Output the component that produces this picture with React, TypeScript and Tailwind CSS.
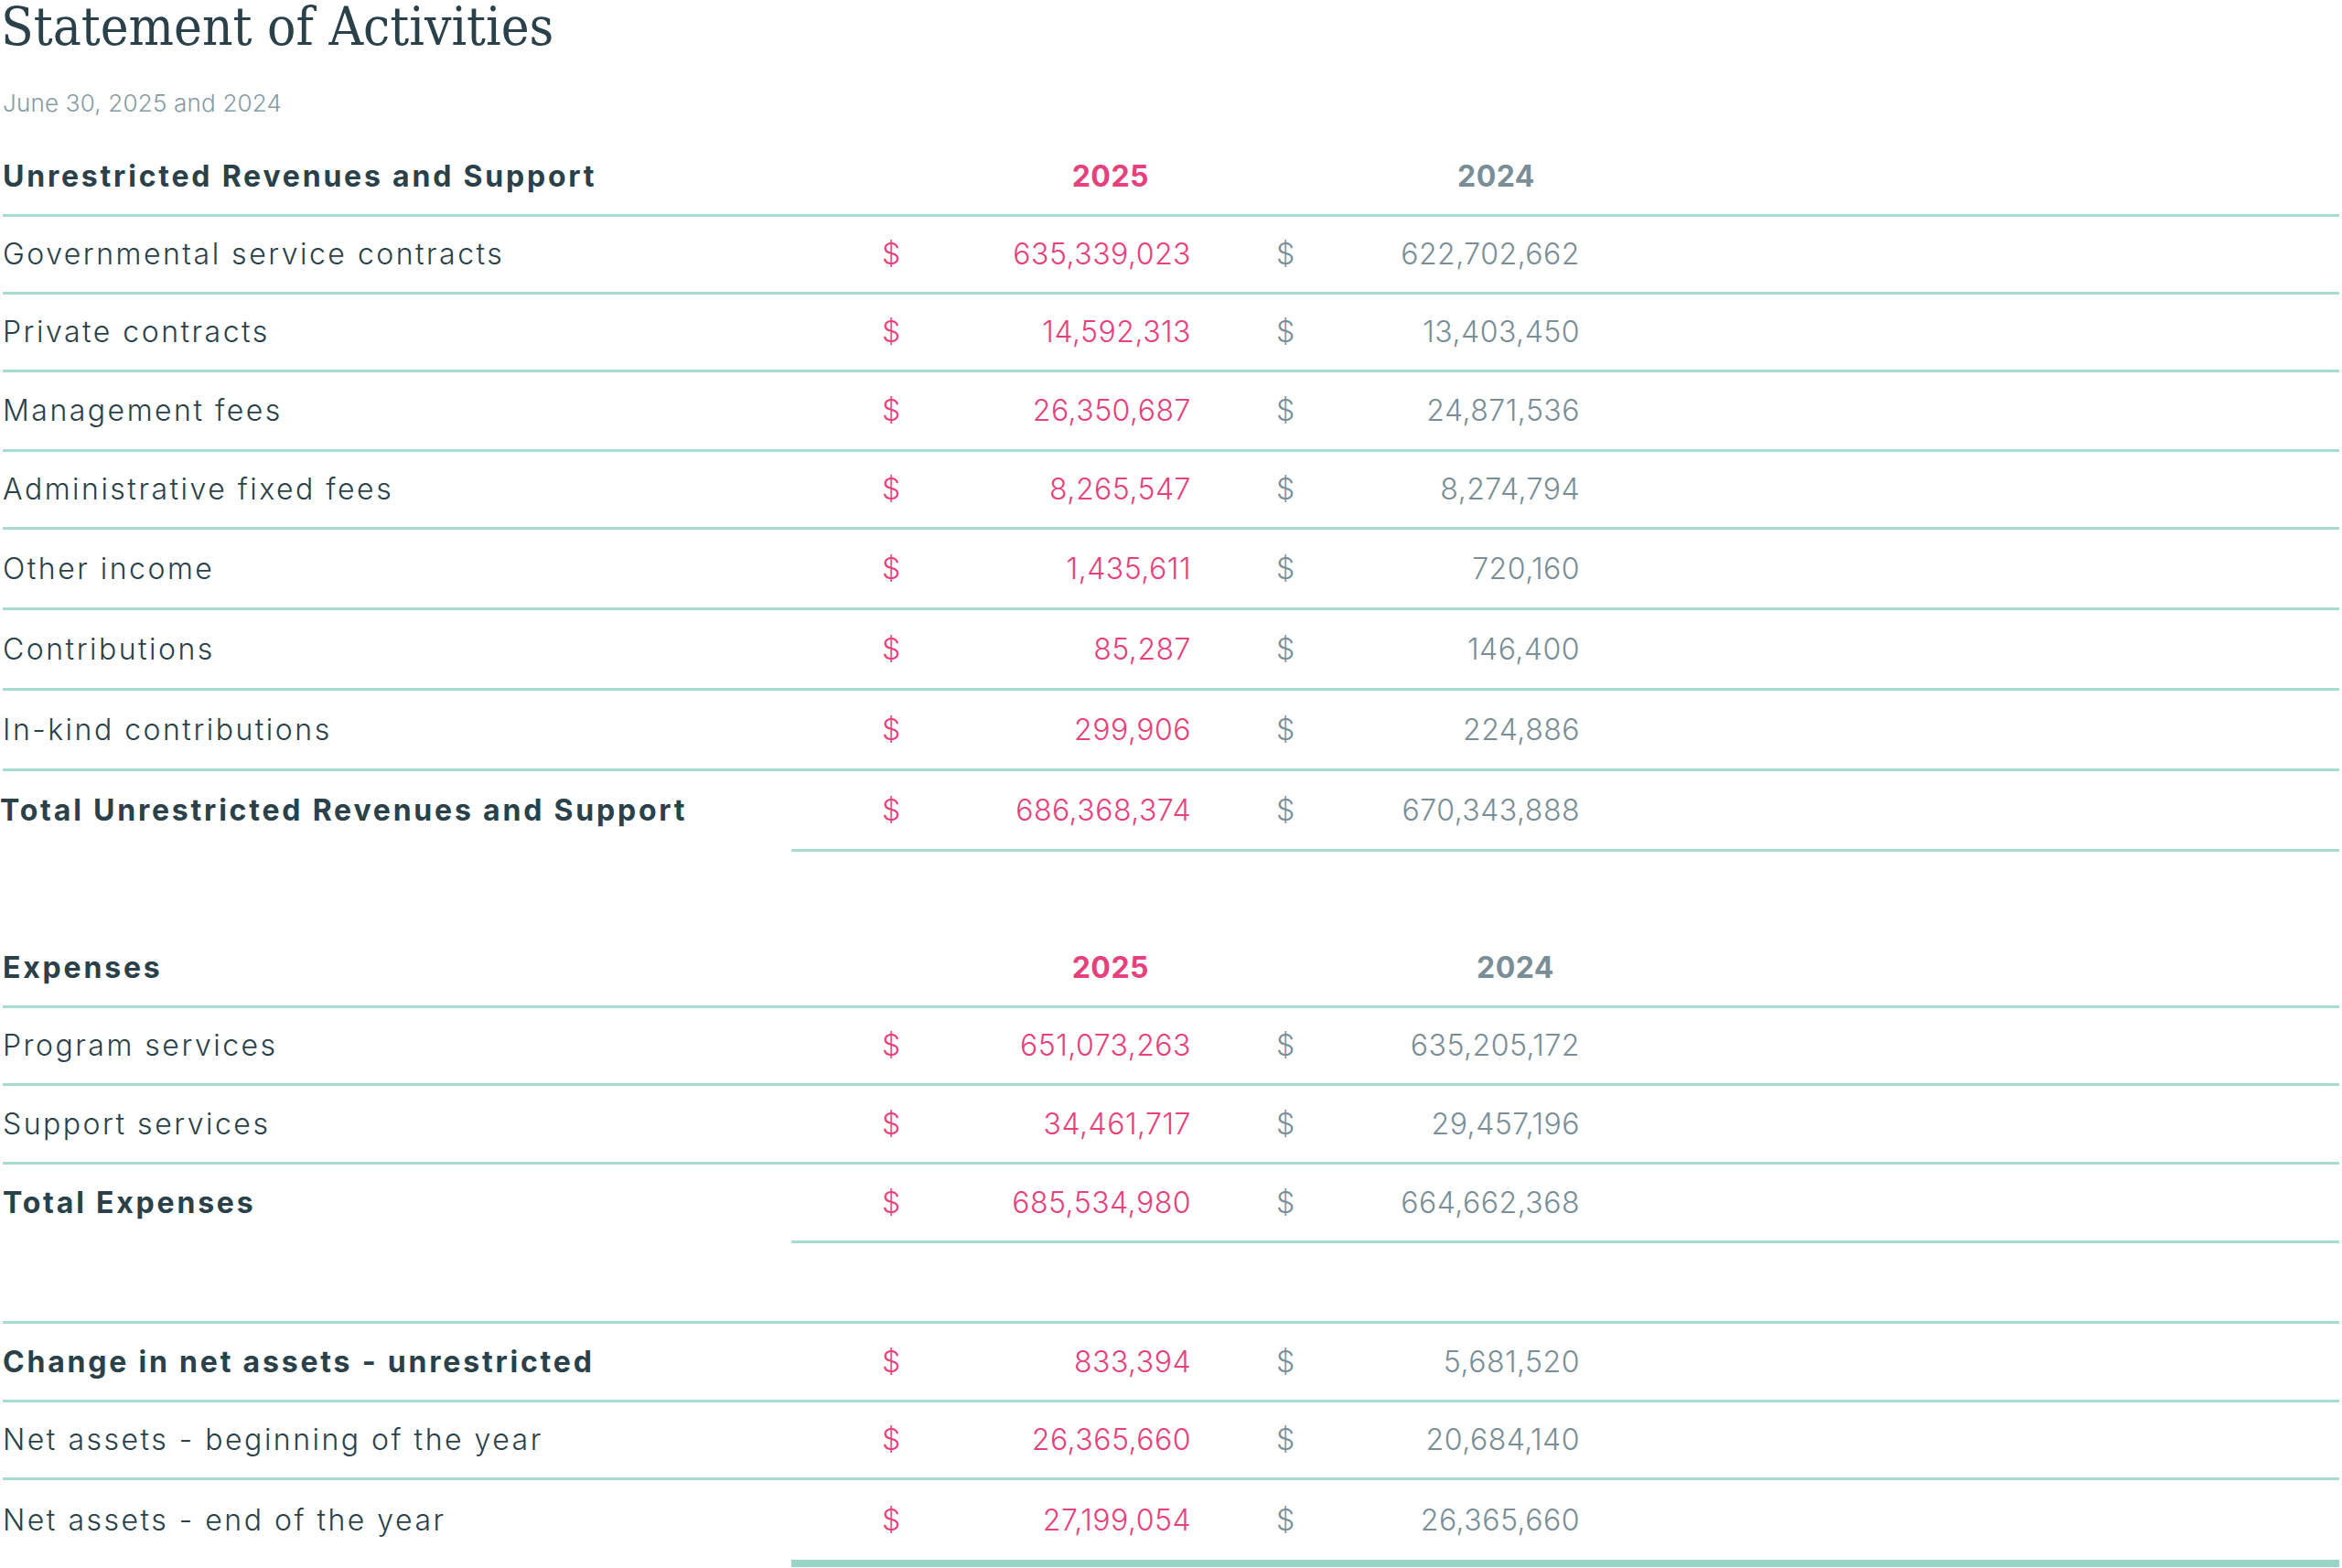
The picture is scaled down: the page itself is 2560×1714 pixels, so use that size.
import React from "react";

type Line = "full" | "total" | "thick" | "none";

type RowData = {
    label?: string;
    a?: string;
    b?: string;
    bold?: boolean;
    h: string;
    line: Line;
    shiftLabel?: boolean;
};

const cols = "grid grid-cols-[959px_40px_300px_93px_40px_292px_1fr] items-center";

const revenues: RowData[] = [
    { label: "Governmental service contracts", a: "635,339,023", b: "622,702,662", h: "h-[85px]", line: "full" },
    { label: "Private contracts", a: "14,592,313", b: "13,403,450", h: "h-[85px]", line: "full" },
    { label: "Management fees", a: "26,350,687", b: "24,871,536", h: "h-[87px]", line: "full" },
    { label: "Administrative fixed fees", a: "8,265,547", b: "8,274,794", h: "h-[85px]", line: "full" },
    { label: "Other income", a: "1,435,611", b: "720,160", h: "h-[88px]", line: "full" },
    { label: "Contributions", a: "85,287", b: "146,400", h: "h-[88px]", line: "full" },
    { label: "In-kind contributions", a: "299,906", b: "224,886", h: "h-[88px]", line: "full" },
    { label: "Total Unrestricted Revenues and Support", a: "686,368,374", b: "670,343,888", bold: true, h: "h-[88px]", line: "total", shiftLabel: true },
];

const expenses: RowData[] = [
    { label: "Program services", a: "651,073,263", b: "635,205,172", h: "h-[85px]", line: "full" },
    { label: "Support services", a: "34,461,717", b: "29,457,196", h: "h-[86px]", line: "full" },
    { label: "Total Expenses", a: "685,534,980", b: "664,662,368", bold: true, h: "h-[86px]", line: "total" },
    { h: "h-[88px]", line: "full" },
    { label: "Change in net assets - unrestricted", a: "833,394", b: "5,681,520", bold: true, h: "h-[86px]", line: "full" },
    { label: "Net assets - beginning of the year", a: "26,365,660", b: "20,684,140", h: "h-[85px]", line: "full" },
    { label: "Net assets - end of the year", a: "27,199,054", b: "26,365,660", h: "h-[95px]", line: "thick" },
];

function Row({ row }: { row: RowData }) {
    return (
        <div className={`${row.h} flex flex-col ${row.line === "full" ? "border-b-[3px] border-[#a6dcd2]" : ""}`}>
            <div className={`${cols} flex-1`}>
                <div
                    className={`${row.bold ? "font-bold tracking-[2.8px]" : "font-light tracking-[2.5px]"} whitespace-nowrap text-[#2b414a] ${row.shiftLabel ? "-ml-[3px]" : ""}`}
                >
                    {row.label}
                </div>
                {row.a && <div className="pl-[2px] font-light text-[#e6417d]">$</div>}
                {row.a && <div className="text-right font-light tracking-[0.5px] text-[#e6417d]">{row.a}</div>}
                <div />
                {row.b && <div className="font-light text-[#7a8e97]">$</div>}
                {row.b && <div className="text-right font-light tracking-[0.5px] text-[#7a8e97]">{row.b}</div>}
            </div>
            {row.line === "total" && <div className="ml-[862px] h-[3px] bg-[#a6dcd2]" />}
            {row.line === "thick" && <div className="ml-[862px] h-[8px] bg-[#98d5c8]" />}
        </div>
    );
}

function Header({ title, right2024 }: { title: string; right2024: string }) {
    return (
        <div className={`h-[86px] ${cols} border-b-[3px] border-[#a6dcd2]`}>
            <div className="whitespace-nowrap font-bold tracking-[2.8px] text-[#2b414a]">{title}</div>
            <div />
            <div className="text-right pr-[46px] font-bold tracking-[0.5px] text-[#e6417d]">2025</div>
            <div />
            <div />
            <div className={`text-right font-bold tracking-[0.5px] text-[#7a8e97] ${right2024}`}>2024</div>
        </div>
    );
}

export default function App() {
    return (
        <main className="min-h-screen bg-white px-[3px] font-['Inter',sans-serif] text-[32px] leading-none">

            {/* Title */}
            <h1 className="h-[58px] -ml-[2px] font-['DejaVu_Serif_Condensed','DejaVu_Serif',serif] font-stretch-condensed text-[58px] leading-none text-[#2b414a]">
                Statement of Activities
            </h1>

            <p className="mt-[42px] h-[51px] text-[26px] font-light leading-none tracking-[0.2px] text-[#869ba4]">
                June 30, 2025 and 2024
            </p>

            {/* Revenues */}
            <Header title="Unrestricted Revenues and Support" right2024="pr-[49px]" />
            {revenues.map((r, i) => (
                <Row key={i} row={r} />
            ))}

            <div className="h-[85px]" />

            {/* Expenses */}
            <Header title="Expenses" right2024="pr-[28px]" />
            {expenses.map((r, i) => (
                <Row key={i} row={r} />
            ))}
        </main>
    );
}
